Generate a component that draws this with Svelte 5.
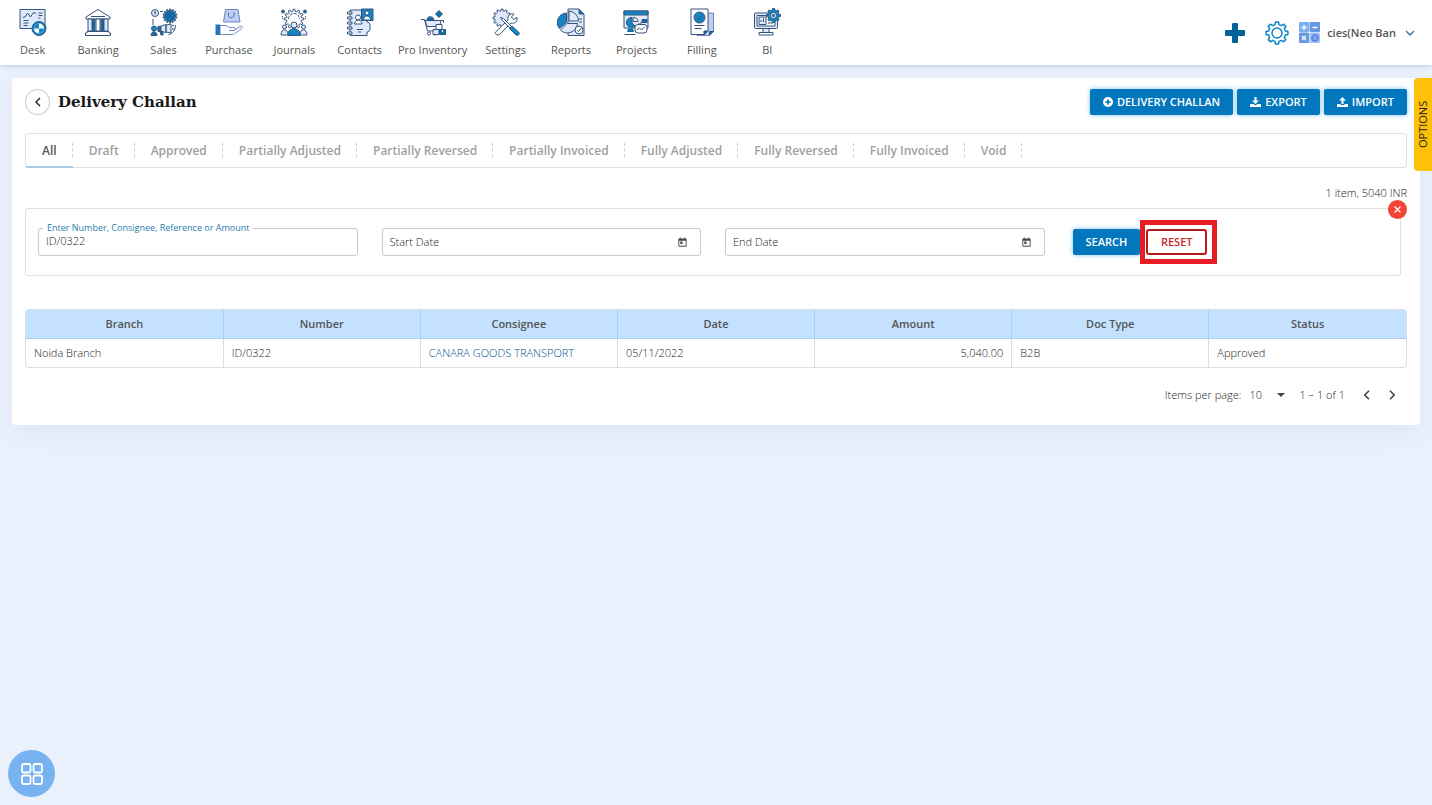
<script>
  const modules = [
    'Desk', 'Banking', 'Sales', 'Purchase', 'Journals', 'Contacts',
    'Pro Inventory', 'Settings', 'Reports', 'Projects', 'Filling', 'BI'
  ];

  const tabs = [
    'All', 'Draft', 'Approved', 'Partially Adjusted', 'Partially Reversed',
    'Partially Invoiced', 'Fully Adjusted', 'Fully Reversed', 'Fully Invoiced', 'Void'
  ];
  let activeTab = $state('All');

  const columns = ['Branch', 'Number', 'Consignee', 'Date', 'Amount', 'Doc Type', 'Status'];
  const rows = [
    {
      branch: 'Noida Branch', number: 'ID/0322', consignee: 'CANARA GOODS TRANSPORT',
      date: '05/11/2022', amount: '5,040.00', docType: 'B2B', status: 'Approved'
    }
  ];

  let query = $state('ID/0322');
  let startDate = $state('');
  let endDate = $state('');

  function reset() {
    query = '';
    startDate = '';
    endDate = '';
  }

  // Outline of a toothed wheel with n teeth between radii inner and outer.
  function gear(cx, cy, inner, outer, n) {
    const step = (Math.PI * 2) / n;
    const at = (r, a) => `${(cx + r * Math.sin(a)).toFixed(2)} ${(cy - r * Math.cos(a)).toFixed(2)}`;
    let d = '';
    for (let i = 0; i < n; i++) {
      const a = i * step;
      d += `${i ? 'L' : 'M'}${at(inner, a - step * 0.3)}L${at(outer, a - step * 0.18)}`;
      d += `L${at(outer, a + step * 0.18)}L${at(inner, a + step * 0.3)}`;
    }
    return d + 'Z';
  }
</script>

{#snippet moduleIcon(name)}
  <svg class="module-icon" viewBox="0 0 28 28" aria-hidden="true">
    {#if name === 'Desk'}
      <rect class="tint" x="1" y="1.5" width="25" height="19" />
      <path d="M4 9.500l2.500-1 2-3.500 3 4 3-4.500 2.500 1" />
      <path d="M19.500 5h4M19.500 7.500h4M19.500 10h2M4.500 12.500h5M4.500 15h5M4.500 17.500h4" />
      <circle class="bright" cx="20" cy="20.500" r="7" />
      <circle class="light" cx="20" cy="20.500" r="5" stroke="none" />
      <path class="bright" stroke="none" d="M20 20.500v-5a5 5 0 0 0-5 5zM20 20.500h5a5 5 0 0 1-5 5z" />
    {:else if name === 'Banking'}
      <path class="light" d="M2 9L14 1.500 26 9v2H2z" />
      <path d="M7 8.500h14" />
      <rect class="tint" x="4" y="11" width="4" height="12" />
      <rect class="blue" x="8.500" y="11" width="2.500" height="12" />
      <rect class="light" x="12" y="11" width="4" height="12" />
      <rect class="blue" x="17" y="11" width="2.500" height="12" />
      <rect class="tint" x="20" y="11" width="4" height="12" />
      <path class="light" d="M3 23.500h22v1.500h1.500v2.500h-25V25H3z" />
    {:else if name === 'Sales'}
      <circle class="tint" cx="5" cy="5" r="3.500" />
      <path d="M5 3.500v3M4 4h2" />
      <path class="blue" d={gear(20, 8, 5.2, 7, 14)} />
      <path d="M18 10.500l4-5" />
      <circle cx="17.500" cy="6" r="1" /><circle cx="22.500" cy="10" r="1" />
      <path d="M10 3.500h3M3 11v6M25.500 17c0 5-3 9-7 9.500" />
      <circle class="bright" cx="4" cy="20.500" r="2.500" />
      <path class="blue" d="M1 27.500c0-5 6-5 6 0z" />
      <path class="tint" d="M8 19l8-2.500v8L8 22.500zM16 17l5-1v9l-5-1z" />
      <path class="blue" d="M8 18.500h3v5H8zM10 23.500h3v3.500h-2z" />
      <path d="M22 18l2-1M22 21h2.500" />
    {:else if name === 'Purchase'}
      <path class="lilac" d="M10.500 1.500h12.500l2 12.500H8.500z" />
      <path d="M13.500 4.500v3c0 3 5.500 3 5.500 0v-3" stroke="#5167ac" />
      <path class="light" stroke="#7189c4" d="M5 17.500h5c3 0 3 2 5 2h4c2 0 2 3 0 3h-5 5l6-4c2-1 3 .5 1.500 2L20 25.500c-1 1-2 1-4 1H5z" />
      <path fill="#2773b9" stroke="none" d="M.5 16.500H5v10.500H.5z" />
    {:else if name === 'Journals'}
      <path class="light" d={gear(14, 11, 7.5, 9.8, 12)} />
      <path d="M8.500 11a5.500 5.500 0 0 1 11 0" stroke-dasharray="3 1" />
      <circle class="blue" cx="3" cy="3.500" r="1.500" /><circle class="blue" cx="25" cy="3.500" r="1.500" />
      <path d="M2.500 8v4M25.500 8v4" stroke-dasharray="1 1" />
      <circle class="tint" cx="4.500" cy="19" r="2" /><circle class="tint" cx="23.500" cy="19" r="2" />
      <path class="tint" d="M1 27c0-7 7-7 7 0zM20 27c0-7 7-7 7 0z" />
      <circle class="tint" cx="14" cy="17" r="3" />
      <path class="bright" d="M8 27.500c-1-9 13-9 12 0z" />
    {:else if name === 'Contacts'}
      <path class="tint" d="M4 2h17v12h1l2 2v6l-2 2h-1v3.500H4z" />
      <path d="M1.500 4H6v2H1.500zM1.500 9H6v2H1.500zM1.500 14H6v2H1.500zM1.500 19H6v2H1.500zM1.500 24H6v2H1.500z" fill="#fff" />
      <circle class="light" cx="12" cy="9.500" r="2.500" />
      <path class="light" d="M8.500 16c0-5 7.500-5 7.500 0z" />
      <path d="M11 21.500h6M12 24h3" />
      <rect class="bright" x="15.500" y="1" width="11.500" height="11.500" />
      <circle class="light" cx="21" cy="5" r="2" />
      <path class="light" d="M17.500 12c0-5.500 7-5.500 7 0z" />
    {:else if name === 'Pro Inventory'}
      <path class="blue" d="M20 2.500l3.500 3.500-3.500 3.500L16.500 6zM8 12c0-3 3-4 4-3 2 0 2.500 1 3 3z" />
      <path class="tint" d="M6 12.500h16l-1.500 6H8z" />
      <path d="M2 11.500h3.500l3 11.500h9M6 12.500h18.500v2" />
      <circle class="light" cx="10" cy="25.500" r="1.500" /><circle class="light" cx="16" cy="25.500" r="1.500" />
      <rect class="light" x="17" y="16.500" width="6" height="5" />
      <rect class="tint" x="14" y="21.500" width="6" height="5" />
      <rect class="blue" x="20.500" y="21.500" width="6" height="5" />
      <path class="line-light" d="M23.500 22v2" />
    {:else if name === 'Settings'}
      <path class="tint" d={gear(10, 10, 7.2, 9, 12)} />
      <path class="light" d="M4 23.500L16 12c-1-4 2-7 6-6l-2.500 3 2 2.500L25 9.500c.5 4-2 6.500-6 5.500L7.500 26.500c-3 1.500-5.500-1-3.500-3z" />
      <path class="light" d="M8.500 9.500l3 1 8 8-1.500 1.500-8-8z" />
      <path class="bright" d="M17.500 20.500l2.500-2.500 7 6.500c1 2-1 3.500-3 2.500z" />
    {:else if name === 'Reports'}
      <path class="tint" d="M11 1h11l5 5v21.500H11z" />
      <path class="blue" d="M22 1v5h5z" />
      <path d="M22 11h3M22 14h3" />
      <path class="bright" d="M9.500 14.500V5a9.500 9.500 0 0 0-7 15.500z" />
      <path class="tint" d="M10 15.500h10.500A10 10 0 0 1 3.500 22z" />
      <path class="tint" d="M12 13V3a10 10 0 0 1 9.500 10z" />
      <circle class="light" cx="22" cy="22" r="4" />
      <path d="M20 22l1.500 1.500 3-3.500" />
    {:else if name === 'Projects'}
      <rect class="tint" x="2" y="3" width="24" height="17" />
      <rect class="bright" x="2" y="3" width="24" height="4" />
      <path class="bright" d="M10 15V9.500a5 5 0 1 0 3 8.500z" />
      <path class="light" d="M11 9.500v4h5c0-2.500-2-4-5-4z" />
      <path class="blue" d="M20 11.500h5v3h-5z" />
      <path d="M19 17v-3M17 17v-2" />
      <path class="blue" d="M6 20.500h5l1 3.500H5z" stroke="none" />
      <path d="M2.500 26.500h11" />
      <rect class="light" x="13" y="16.500" width="12" height="8.500" rx="3" />
      <path d="M15 22l2.500-2 2 2 3-3" />
    {:else if name === 'Filling'}
      <path class="lilac" d="M9 5h16.500v18.500l-4 4H9z" />
      <path class="light" d="M3 1h17v22l-4 3.500H3z" />
      <path class="blue" d="M16 26.500V23h4zM21.500 27.500v-4h4z" />
      <circle class="bright" cx="11.500" cy="9.500" r="5.500" />
      <path d="M8.500 9.500l2 2 4-4.500" />
      <path d="M6.500 17.500h10M6.500 20.500h7" />
    {:else}
      <rect class="tint" x="1.500" y="5" width="23" height="15.500" rx="1" />
      <rect class="light" x="4" y="7.500" width="18" height="10.500" />
      <rect class="tint" x="6" y="9" width="7" height="7.500" />
      <path d="M8 14v-2M10.500 14v-3.500M15 15h5" />
      <path class="tint" d="M10 20.500h6v4h-6z" />
      <path class="light" d="M6 24.500h14V27H6z" />
      <path class="bright" d={gear(20.5, 7.5, 5.6, 7, 8)} />
      <circle class="light" cx="20.500" cy="7.500" r="3" />
      <circle class="bright" cx="20.500" cy="7.500" r="1.200" />
    {/if}
  </svg>
{/snippet}

{#snippet calendarIcon()}
  <svg class="calendar-icon" viewBox="0 0 24 24" aria-hidden="true">
    <path d="M19 3h-1V1h-2v2H8V1H6v2H5c-1.100 0-2 .9-2 2v14c0 1.100.9 2 2 2h14c1.100 0 2-.9 2-2V5c0-1.100-.9-2-2-2zm0 16H5V8h14v11zM7 10h5v5H7z" />
  </svg>
{/snippet}

<div class="page">
  <header class="topbar">
    <nav class="modules" aria-label="Modules">
      {#each modules as name}
        <a class="module" href="#{name.toLowerCase().replace(' ', '-')}">
          {@render moduleIcon(name)}
          <span>{name}</span>
        </a>
      {/each}
    </nav>
    <div class="tools">
      <button class="tool" aria-label="Add">
        <svg width="20" height="20" viewBox="0 0 20 20"><path fill="#00629b" d="M8 0h4q1 0 1 1v6h6q1 0 1 1v4q0 1-1 1h-6v6q0 1-1 1H8q-1 0-1-1v-6H1q-1 0-1-1V8q0-1 1-1h6V1q0-1 1-1z" /></svg>
      </button>
      <button class="tool gear" aria-label="Preferences">
        <svg width="24" height="24" viewBox="0 0 24 24" fill="none" stroke="#0b84c6" stroke-width="1.500" stroke-linejoin="round">
          <path d={gear(12, 12, 8.6, 11, 8)} /><circle cx="12" cy="12" r="5" />
        </svg>
      </button>
      <button class="tool" aria-label="Calculator">
        <svg width="21" height="21" viewBox="0 0 21 21">
          <rect width="10" height="10" rx="1" fill="#79b1f1" /><rect x="10.500" width="10.500" height="10" rx="1" fill="#6796e3" />
          <rect y="10.500" width="10" height="10.500" rx="1" fill="#6796e3" /><rect x="10.500" y="10.500" width="10.500" height="10.500" rx="1" fill="#9cc0f8" />
          <path d="M5 3v5M2.500 5.500h5M13.500 5.500h5M3 14l4 4M7 14l-4 4" stroke="#fff" stroke-width="1.300" />
          <circle cx="16" cy="16" r="3.700" fill="#5b82dc" /><path d="M14 15h4M14 17h4" stroke="#a9c5f6" />
        </svg>
      </button>
      <button class="account">
        <span>cies(Neo Ban</span>
        <svg width="10" height="6" viewBox="0 0 10 6" fill="none" stroke="#2377ac" stroke-width="1.300"><path d="M1 1l4 4 4-4" /></svg>
      </button>
    </div>
  </header>

  <main class="card">
    <div class="heading">
      <button class="back" aria-label="Back">
        <svg width="6" height="10" viewBox="0 0 6 10" fill="none" stroke="#222" stroke-width="1.400"><path d="M5 1L1 5l4 4" /></svg>
      </button>
      <h1>Delivery Challan</h1>
      <div class="actions">
        <button class="primary">
          <svg width="10" height="10" viewBox="0 0 10 10"><circle cx="5" cy="5" r="5" fill="#fff" /><path d="M5 2.200v5.600M2.200 5h5.600" stroke="#0277bd" stroke-width="1.600" /></svg>
          DELIVERY CHALLAN
        </button>
        <button class="primary">
          <svg width="11" height="11" viewBox="0 0 11 11" fill="#fff"><path d="M4.500 0h2v3.500H9L5.500 7 2 3.500h2.500zM0 7h3.500L5.500 8.500 7.500 7H11v3H0z" /></svg>
          EXPORT
        </button>
        <button class="primary">
          <svg width="11" height="11" viewBox="0 0 11 11" fill="#fff"><path d="M4.500 7h2V3.500H9L5.500 0 2 3.500h2.500zM0 7h3.500v1h4V7H11v3H0z" /></svg>
          IMPORT
        </button>
      </div>
    </div>

    <div class="tabs" role="tablist">
      {#each tabs as tab}
        <button
          role="tab"
          class="tab"
          class:active={tab === activeTab}
          aria-selected={tab === activeTab}
          onclick={() => (activeTab = tab)}>{tab}</button>
      {/each}
    </div>

    <p class="summary">1 item, 5040 INR</p>

    <form class="filters" onsubmit={(e) => e.preventDefault()}>
      <div class="cell">
        <div class="field">
          <label for="query">Enter Number, Consignee, Reference or Amount</label>
          <input id="query" class="filled" bind:value={query} />
        </div>
      </div>
      <div class="cell">
        <div class="field">
          <input aria-label="Start Date" placeholder="Start Date" bind:value={startDate} />
          {@render calendarIcon()}
        </div>
      </div>
      <div class="cell">
        <div class="field">
          <input aria-label="End Date" placeholder="End Date" bind:value={endDate} />
          {@render calendarIcon()}
        </div>
      </div>
      <div class="cell buttons">
        <button class="primary search" type="submit">SEARCH</button>
        <div class="highlight">
          <button class="reset" type="button" onclick={reset}>RESET</button>
        </div>
      </div>
      <button class="close" type="button" aria-label="Close filters">
        <svg width="7" height="7" viewBox="0 0 7 7" stroke="#fff" stroke-width="1.200"><path d="M.5.5l6 6M6.500.5l-6 6" /></svg>
      </button>
    </form>

    <div class="table-frame">
      <table>
        <thead>
          <tr>{#each columns as column}<th scope="col">{column}</th>{/each}</tr>
        </thead>
        <tbody>
          {#each rows as row}
            <tr>
              <td>{row.branch}</td>
              <td>{row.number}</td>
              <td><a href="#consignee">{row.consignee}</a></td>
              <td>{row.date}</td>
              <td class="amount">{row.amount}</td>
              <td>{row.docType}</td>
              <td>{row.status}</td>
            </tr>
          {/each}
        </tbody>
      </table>
    </div>

    <div class="paginator">
      <label for="page-size">Items per page:</label>
      <div class="page-size">
        <select id="page-size">
          <option>10</option>
          <option>25</option>
          <option>50</option>
        </select>
        <svg width="8" height="4" viewBox="0 0 8 4" fill="#444" aria-hidden="true"><path d="M0 0h8L4 4z" /></svg>
      </div>
      <span class="range">1 – 1 of 1</span>
      <button aria-label="Previous page">
        <svg width="7" height="10" viewBox="0 0 7 10" fill="none" stroke="#444" stroke-width="1.600"><path d="M6 .8L1.800 5 6 9.200" /></svg>
      </button>
      <button aria-label="Next page">
        <svg width="7" height="10" viewBox="0 0 7 10" fill="none" stroke="#444" stroke-width="1.600"><path d="M1 .8L5.200 5 1 9.200" /></svg>
      </button>
    </div>
  </main>

  <button class="options">OPTIONS</button>

  <button class="launcher" aria-label="Apps">
    <svg width="22" height="22" viewBox="0 0 22 22" fill="none" stroke="#fff" stroke-width="1.800">
      <rect x="1" y="1" width="8.500" height="8.500" rx="1.500" /><rect x="12.500" y="1" width="8.500" height="8.500" rx="1.500" />
      <rect x="1" y="12.500" width="8.500" height="8.500" rx="1.500" /><rect x="12.500" y="12.500" width="8.500" height="8.500" rx="1.500" />
    </svg>
  </button>
</div>

<style>
  :global(body) {
    margin: 0;
    background: #eaf1fd;
  }

  .page {
    min-height: 100vh;
    font-family: 'Open Sans', sans-serif;
    font-size: 11px;
    font-weight: 300;
    line-height: 16px;
    color: #222;
  }

  .page :is(button, input, select) {
    font: inherit;
    color: inherit;
  }

  button {
    display: inline-flex;
    align-items: center;
    justify-content: center;
    margin: 0;
    padding: 0;
    border: 0;
    background: none;
    cursor: pointer;
  }

  a {
    text-decoration: none;
    color: inherit;
  }

  .topbar {
    display: flex;
    align-items: center;
    justify-content: space-between;
    height: 65px;
    background: #fff;
    box-shadow: 0 1px 5px #b9c6dd;
  }

  .modules {
    display: grid;
    grid-template-columns: repeat(6, 65fr) 80fr repeat(5, 65fr);
    width: 800px;
  }

  .module {
    display: flex;
    flex-direction: column;
    align-items: center;
    gap: 6px;
    font-weight: 500;
    color: #555;
    white-space: nowrap;
  }

  .module-icon {
    width: 28px;
    height: 28px;
    fill: none;
    stroke: #34547c;
    stroke-width: 1;
    stroke-linejoin: round;
  }

  .tint { fill: #dfe9fb; }
  .lilac { fill: #bfcdf3; stroke: #6f84bd; }
  .light { fill: #fff; }
  .blue { fill: #0c72b0; }
  .bright { fill: #1484c4; }
  .line-light { stroke: #fff; }

  .tools {
    display: flex;
    align-items: center;
    padding-right: 17px;
  }

  .tool.gear {
    margin: 0 10px 0 20px;
  }

  .account {
    gap: 9px;
    margin-left: 7px;
  }

  .account span {
    font-weight: 600;
    color: #555;
  }

  .card {
    margin: 13px 12px 0;
    padding: 11px 13px 17px;
    border-radius: 4px;
    background: #fff;
    box-shadow: 0 10px 24px #dfe7f6;
  }

  .heading {
    display: flex;
    align-items: center;
    gap: 8px;
  }

  .back {
    width: 25px;
    height: 26px;
    border: 1px solid #ccc;
    border-radius: 50%;
  }

  h1 {
    margin: 0;
    font: 700 15px/20px 'DejaVu Serif', serif;
    color: #1a1a1a;
  }

  .actions {
    display: flex;
    gap: 4px;
    margin-left: auto;
  }

  .page .primary {
    gap: 4px;
    height: 26px;
    padding: 0 13px;
    border-radius: 2px;
    background: #0277bd;
    box-shadow: 0 0 5px #7cc4ee;
    font-weight: 600;
    color: #fff;
  }

  .tabs {
    display: flex;
    align-items: center;
    height: 33px;
    margin-top: 18px;
    border: 1px solid #e0e0e0;
    border-radius: 3px;
  }

  .page .tab {
    position: relative;
    height: 33px;
    padding: 0 16px;
    font-size: 12px;
    font-weight: 600;
    color: #a0a0a0;
  }

  .tab::after {
    content: '';
    position: absolute;
    top: 9px;
    right: 0;
    height: 14px;
    border-right: 1px dashed #ccc;
  }

  .page .tab.active {
    box-shadow: 0 1px 0 #a9cbe2, inset 0 -1px 0 #a9cbe2;
    color: #555;
  }

  .summary {
    margin: 17px 0 7px;
    text-align: right;
  }

  .filters {
    position: relative;
    display: grid;
    grid-template-columns: repeat(4, 1fr);
    align-items: center;
    height: 66px;
    margin-right: 6px;
    border: 1px solid #e0e0e0;
    border-radius: 3px;
  }

  .cell {
    padding: 0 12px;
  }

  .field {
    position: relative;
    display: flex;
    align-items: center;
    height: 26px;
    border: 1px solid #ccc;
    border-radius: 3px;
    box-shadow: 0 0 1px #ccc;
  }

  .field label {
    position: absolute;
    top: -7px;
    left: 4px;
    padding: 0 4px;
    background: #fff;
    font-size: 9px;
    font-weight: 400;
    line-height: 12px;
    color: #2a7db0;
  }

  .field input {
    flex: 1;
    min-width: 0;
    padding: 0 7px;
    border: 0;
    outline: 0;
    background: none;
  }

  .field input.filled {
    padding-bottom: 2px;
  }

  .field input::placeholder {
    color: #222;
    opacity: 1;
  }

  .calendar-icon {
    width: 11px;
    height: 11px;
    margin-right: 12px;
    fill: #444;
  }

  .buttons {
    display: flex;
    align-items: center;
    padding-left: 16px;
  }

  .highlight {
    padding: 4px 5px 4px 1px;
    border: 5px solid #e81c24;
    background: #fff;
  }

  .page .reset {
    width: 61px;
    height: 26px;
    border: 2px solid #b71c1c;
    border-radius: 3px;
    font-weight: 600;
    color: #c62828;
  }

  .close {
    position: absolute;
    top: -9px;
    right: -7px;
    width: 19px;
    height: 19px;
    border-radius: 50%;
    background: #f44336;
  }

  .table-frame {
    margin-top: 33px;
    overflow: hidden;
    border: 1px solid #d9dee3;
    border-radius: 4px;
  }

  table {
    width: 100%;
    table-layout: fixed;
    border-collapse: collapse;
  }

  th,
  td {
    height: 28px;
    padding: 0 8px;
    border-right: 1px solid #ddd;
    text-align: left;
  }

  th {
    border-color: #a9d0f3;
    border-bottom: 1px solid #a9d0f3;
    background: #c4e1ff;
    text-align: center;
    font-weight: 600;
    color: #555;
  }

  th:last-child,
  td:last-child {
    border-right: 0;
  }

  td a {
    color: #00508c;
  }

  td.amount {
    text-align: right;
  }

  .paginator {
    display: flex;
    align-items: center;
    justify-content: flex-end;
    margin-top: 14px;
    padding-right: 2px;
  }

  .page-size {
    display: grid;
    align-items: center;
    width: 36px;
    margin: 0 14px 0 8px;
  }

  .page-size > * {
    grid-area: 1 / 1;
  }

  .page-size svg {
    justify-self: end;
    pointer-events: none;
  }

  .paginator select {
    border: 0;
    padding: 0;
    appearance: none;
    background: none;
  }

  .paginator button {
    width: 26px;
    height: 26px;
  }

  .range {
    margin-right: 8px;
  }

  .page .options {
    position: absolute;
    top: 78px;
    right: 0;
    width: 18px;
    height: 93px;
    border-radius: 0 4px 4px 0;
    background: #ffc107;
    font-weight: 400;
    writing-mode: vertical-rl;
    transform: rotate(180deg);
  }

  .launcher {
    position: fixed;
    bottom: 8px;
    left: 8px;
    width: 47px;
    height: 47px;
    border-radius: 50%;
    background: #76b3f0;
  }
</style>
